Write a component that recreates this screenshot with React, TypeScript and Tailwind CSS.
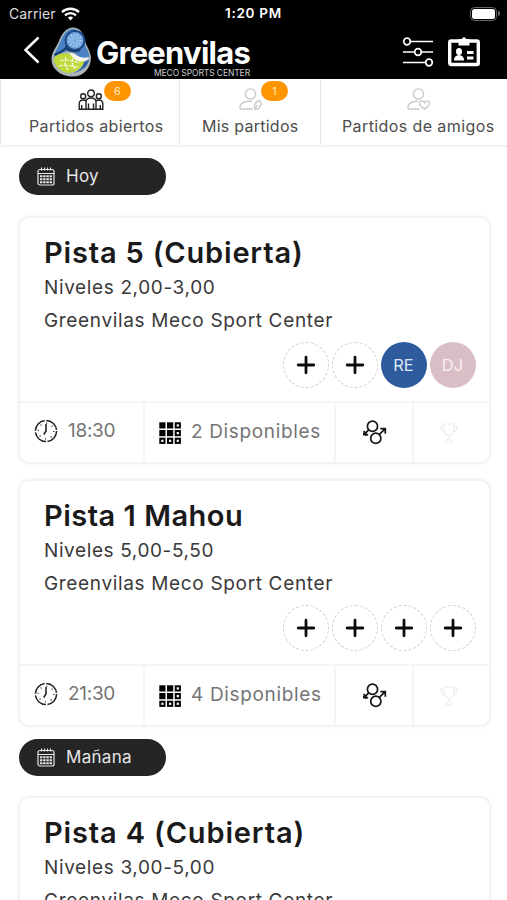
import React from "react";

const Wifi = () => (
  <svg width="19" height="14" viewBox="0 0 19 14" fill="none" stroke="#fff" strokeWidth="2.3">
    <path d="M1 5.2C5.8.6 13.2.6 18 5.2" />
    <path d="M4 8.4c3.2-3 7.8-3 11 0" />
    <path d="M6.8 10.6c1.6-1.4 3.8-1.4 5.4 0L9.5 13.4z" fill="#fff" stroke="none" />
  </svg>
);

const Logo = () => (
  <svg width="41" height="50" viewBox="0 0 41 50">
    <path d="M22 .5c7 0 10 5 11.500 12 1.500 6.500 6 11 6.500 18C40 42 32 49.500 22 49.500 10 49.500 .5 42 .5 32.500 .5 25 5 21 8 14 10.500 7 15 .5 22 .5z" fill="#a9b4b6" />
    <path d="M22 2c6 0 9 5 10.500 11.500 1.500 6.500 5.500 10 6 17-4 2-10 1-13-3-4-4-10-4-14-1.500-3 1-6 2-8.500 4C4 24 7 21 9.500 14.500 12 8 16 2 22 2z" fill="#4a80c4" />
    <path d="M3 31c3-4 10-6 15-4 6 2 8 6 16 5C33 40 24 46.500 16 46 7 43 2 37 3 31z" fill="#bfd93a" />
    <path d="M18 26c6-1 10 7 20 4-1 4-8 6-13 3-3-2-4-4-7-7z" fill="#f4f8ee" />
    <path d="M38 33c-1 6-7 11-15 13 6-3 9-6 10-11z" fill="#2a5ea6" />
    <ellipse cx="24" cy="13.500" rx="9.500" ry="9.500" fill="#6fa3dc" stroke="#1d4682" strokeWidth="2" />
    <ellipse cx="24" cy="13.500" rx="4" ry="4" fill="none" stroke="#a3c8ee" strokeWidth="6" strokeDasharray="1 1.200" />
    <path d="M16.500 18.500c-3 5-6 6-13 9.500M15 21c3 3 9 4.500 14 2" fill="none" stroke="#163d72" strokeWidth="2.200" />
    <path d="M9 34c6-2 12 0 20 2M8 39c8-2 13 1 20 1M15 30c-2 5-1 10 3 14M22 31c-2 5 0 8 2 11" fill="none" stroke="#f2f8d4" strokeWidth="1.300" strokeDasharray="4 1" />
  </svg>
);

const Filters = () => (
  <svg width="32" height="32" viewBox="0 0 32 32" fill="#000" stroke="#fff" strokeWidth="1.7">
    <path d="M1 5.500h30M1 16h30M1 26.500h30" />
    <circle cx="5" cy="5.500" r="3.300" />
    <circle cx="16" cy="16" r="3.300" />
    <circle cx="27" cy="26.500" r="3.300" />
  </svg>
);

const IdCard = () => (
  <svg width="34" height="32" viewBox="0 0 34 32">
    <rect x="2.700" y="5" width="28.600" height="23.500" rx="1.500" fill="none" stroke="#fff" strokeWidth="3.400" />
    <path d="M11.500 9.500V3h3.500a2 1.700 0 0 1 4 0h3.500v6.500z" fill="#fff" />
    <ellipse cx="12" cy="15.500" rx="3" ry="3.500" fill="#fff" />
    <path d="M7 24.500c0-4 2-5 5-5.500 3 .5 5 1.500 5 5.500z" fill="#fff" />
    <path d="M20 16.500h6.500M20 22h6.500" stroke="#fff" strokeWidth="2.800" />
  </svg>
);

const People = () => (
  <svg width="26" height="22" viewBox="0 0 26 22" fill="none" stroke="#222" strokeWidth="1.400">
    <circle cx="13" cy="4.300" r="3.300" />
    <circle cx="5.200" cy="7.300" r="2.500" />
    <circle cx="20.800" cy="7.300" r="2.500" />
    <path d="M8 20.300v-7.500C8 10.300 10 9 13 9s5 1.300 5 3.800v7.500zM8 20.300H1.200V15c0-2.800 1.800-4 4-4 1.200 0 2.100.3 2.800 1M18 20.300h6.800V15c0-2.800-1.800-4-4-4-1.200 0-2.100.3-2.800 1M10.500 14.500v5.500M15.500 14.500v5.500M3.700 16v4M22.300 16v4" />
  </svg>
);

const Person = ({ heart = false }: { heart?: boolean }) => (
  <svg width="24" height="23" viewBox="0 0 24 23" fill="none" stroke="#c9c9c9" strokeWidth="1.400">
    <circle cx="11.500" cy="6" r="5.100" />
    {heart ? (
      <>
        <path d="M12.500 21H2.200c-1.500 0-1.500-2-.7-3.800C3 14.200 6 13 11 13.200" />
        <path d="M17.500 21.200c-6-4.200-5.700-7-4-8 1.600-.9 3.300 0 4 1.400.7-1.400 2.400-2.300 4-1.400 1.700 1 2 3.800-4 8z" />
      </>
    ) : (
      <>
        <path d="M14 21H2.200c-1.500 0-1.500-2-.7-3.800C3 14 6.500 13 13 13.300" />
        <path d="M16 21c-1.500-3 .3-7.700 4.500-8.500 3.500 2.500.8 8-3.300 9zM16 21l2.500-4" />
      </>
    )}
  </svg>
);

const Calendar = () => (
  <svg width="18" height="19" viewBox="0 0 18 19" fill="none" stroke="#e8e8e8">
    <rect x="1" y="2.500" width="16" height="15.500" rx="2" strokeWidth="1.200" />
    <path d="M1 6.500h16" strokeWidth="1" />
    <path d="M4.500.5v3M7.500.5v3M10.500.5v3M13.500.5v3" strokeWidth="1.100" />
    <path d="M3 9.200h12M3 12.200h12M3 15.200h12" strokeWidth="2" strokeDasharray="2.400 .8" />
  </svg>
);

const Clock = () => (
  <svg width="24" height="24" viewBox="0 0 24 24" fill="none" stroke="#222">
    <circle cx="12" cy="12" r="10.600" strokeWidth="1.500" strokeDasharray="15 1.650" />
    <path d="M12 5v7l-2.300 3.500" strokeWidth="1.600" />
    <circle cx="12" cy="12" r="7.800" strokeWidth="1.300" strokeDasharray="1 5.126" />
  </svg>
);

const Squares = () => (
  <svg width="22" height="22" viewBox="0 0 22 22">
    {[0, 1, 2].map((r) =>
      [0, 1, 2].map((c) => (
        <g key={`${r}${c}`}>
          <rect x={c * 7.700 + 0.3} y={r * 7.700 + 0.3} width="6.200" height="6.200" fill="#000" />
          {(r === 2 || c === 2) && <rect x={c * 7.700 + 2.300} y={r * 7.700 + 2.300} width="2.200" height="2.200" fill="#fff" />}
        </g>
      )),
    )}
  </svg>
);

const Genders = () => (
  <svg width="26" height="25" viewBox="0 0 26 25" fill="none" stroke="#151515" strokeWidth="1.700">
    <circle cx="11.500" cy="6.200" r="5.100" />
    <circle cx="14.800" cy="18.200" r="5.100" />
    <path d="M7.800 9.900 2.300 15.200M2.600 11.200l4.200 4.200M2 13.500h2.500v2.500M18.400 14.400 24 8.900M19.300 8.700h5v5" />
  </svg>
);

const Trophy = () => (
  <svg width="18" height="20" viewBox="0 0 18 20" fill="none" stroke="#ececec" strokeWidth="1.100">
    <path d="M4 1h10v5c0 4-2 6-5 7-3-1-5-3-5-7zM4 3H1c0 4 1 6 4.500 6.500M14 3h3c0 4-1 6-4.500 6.500M9 13v3M6 19c0-2 1-3 3-3s3 1 3 3z" />
  </svg>
);

const Pill = ({ children }: { children: React.ReactNode }) => (
  <div className="flex h-[37px] w-[147px] items-center rounded-full bg-[#252525] pl-[18px] text-[17px] text-[#e6e6e6]">
    <Calendar />
    {children}
  </div>
);

const Plus = () => (
  <div className="flex size-[46px] items-center justify-center rounded-full border border-dashed border-[#cfcfcf]">
    <svg width="20" height="20" viewBox="0 0 20 20" stroke="#0c0c0c" strokeWidth="2.800" strokeLinecap="round">
      <path d="M10 2.200v15.600M2.200 10h15.600" />
    </svg>
  </div>
);

type CardProps = {
  title: React.ReactNode;
  levels: React.ReactNode;
  time?: React.ReactNode;
  free?: React.ReactNode;
  players?: { name: string; tone: string }[];
};

const Card = ({ title, levels, time, free, players = [] }: CardProps) => (
  <section className="h-[248px] w-[473px] shrink-0 overflow-hidden rounded-[11px] border-2 border-[#f3f3f3] bg-white shadow-[0_0_5px_rgba(0,0,0,0.04)]">
    <div className="h-[183px] pt-[17px] pr-[13.5px] pl-6">
      <h2 className="h-9 text-[29px] leading-9 font-semibold text-[#1a1a1a]">{title}</h2>
      <p className="h-[33px] text-[19px] leading-[33px] text-[#3a3a3a]">{levels}</p>
      <p className="h-[33px] text-[19px] leading-[33px] text-[#3a3a3a]">
        <span className="tracking-[0.66px]">Greenvilas Meco Sport Center</span>
      </p>
      <div className="mt-[5px] flex justify-end gap-[3px]">
        {Array.from({ length: 4 - players.length }, (_, i) => (
          <Plus key={i} />
        ))}
        {players.map((p) => (
          <div key={p.name} className={`flex size-[46px] items-center justify-center rounded-full text-[16.5px] ${p.tone}`}>
            {p.name}
          </div>
        ))}
      </div>
    </div>
    <div className="flex h-[61px] border-t-2 border-[#f5f5f5] text-[19px] text-[#757575]">
      <div className="flex w-[123px] items-center pb-[3px] pl-[14px]">
        <Clock />
        {time}
      </div>
      <div className="flex w-[191px] items-center border-l-2 border-[#f5f5f5] pl-[14px]">
        <Squares />
        {free}
      </div>
      <div className="flex w-[78px] items-center justify-center border-l-2 border-[#f5f5f5]">
        <Genders />
      </div>
      <div className="flex flex-1 items-center border-l-2 border-[#f5f5f5] pl-[26px]">
        <Trophy />
      </div>
    </div>
  </section>
);

export default function App() {
  return (
    <div className="flex h-[900px] w-[507px] flex-col overflow-hidden bg-white font-['Inter','Liberation_Sans',sans-serif] whitespace-nowrap">
      <header className="h-[79px] shrink-0 bg-black text-white">
        <div className="flex h-[27px] items-center pl-[9px]">
          <span className="w-[52px] text-[14px] tracking-[0.1px] text-[#dedede]">Carrier</span>
          <Wifi />
          <span className="ml-[145px] w-[58px] text-[13.5px] font-semibold tracking-[0.7px]">1:20 PM</span>
          <div className="ml-[187px] flex items-center">
            <div className="h-[14px] w-[27px] rounded-[4.500px] border border-[#666] p-px">
              <div className="size-full rounded-[2.500px] bg-white" />
            </div>
            <div className="ml-px h-[5px] w-[2px] rounded-r bg-[#666]" />
          </div>
        </div>
        <div className="flex h-[52px] items-start">
          <svg className="mt-[9px] ml-[23px]" width="18" height="28" viewBox="0 0 18 28" fill="none" stroke="#fff" strokeWidth="2.500">
            <path d="M15.500 1.500 2.500 14l13 12.500" />
          </svg>
          <div className="ml-[10px]">
            <Logo />
          </div>
          <div className="ml-[4px] flex w-[154px] flex-col pt-[10px]">
            <span className="h-[31px] text-[31px] leading-[31px] font-bold tracking-[-0.75px]">Greenvilas</span>
            <span className="mt-px h-[9px] text-right text-[8.5px] leading-[9px] tracking-[-0.1px] text-[#ccc]">MECO SPORTS CENTER</span>
          </div>
          <div className="mt-[9px] ml-[152px] flex gap-[13px]">
            <Filters />
            <IdCard />
          </div>
        </div>
      </header>

      <nav className="flex h-[68px] shrink-0 border-b-2 border-[#f1f1f1] text-[16px] text-[#4d4d4d]">
        <div className="flex w-[180px] flex-col border-x border-[#e8e8e8] pt-[10px]">
          <div className="relative ml-[77px] h-[23px] w-[26px]">
            <People />
            <span className="absolute -top-[8px] left-[26px] flex h-5 w-[27px] items-center justify-center rounded-full bg-[#ff9500] text-[11px] text-[#ffe5c0]">6</span>
          </div>
          <span className="ml-[28px] h-7 leading-7 tracking-[0.37px]">Partidos abiertos</span>
        </div>
        <div className="flex w-[141px] flex-col border-r border-[#e8e8e8] pt-[9px]">
          <div className="relative ml-[59px] h-6 w-6">
            <Person />
            <span className="absolute -top-[7px] left-[22px] flex h-5 w-[27px] items-center justify-center rounded-full bg-[#ff9500] text-[11px] text-[#ffe5c0]">1</span>
          </div>
          <span className="ml-[22px] h-7 leading-7 tracking-[0.25px]">Mis partidos</span>
        </div>
        <div className="flex flex-1 flex-col pt-[9px]">
          <div className="ml-[86px] h-6">
            <Person heart />
          </div>
          <span className="ml-[21px] h-7 leading-7 tracking-[0.4px]">Partidos de amigos</span>
        </div>
      </nav>

      <main className="flex flex-1 flex-col overflow-hidden pt-[11px]">
        <div className="flex h-[58px] shrink-0 pl-[19px]">
          <Pill>
            <span className="ml-[11px] tracking-[0.3px]">Hoy</span>
          </Pill>
        </div>
        <div className="flex h-[523px] shrink-0 flex-col gap-[15px] pl-[18px]">
          <Card
            title={<span className="tracking-[0.82px]">Pista 5 (Cubierta)</span>}
            levels={<span className="tracking-[0.63px]">Niveles 2,00-3,00</span>}
            time={<span className="ml-[10px] tracking-[-0.3px]">18:30</span>}
            free={<span className="ml-[10px] tracking-[0.65px]">2 Disponibles</span>}
            players={[
              { name: "RE", tone: "bg-[#2e5b9e] text-[#dce6f4]" },
              { name: "DJ", tone: "bg-[#d9bec5] text-[#f7eff1]" },
            ]}
          />
          <Card
            title={<span className="tracking-[0.5px]">Pista 1 Mahou</span>}
            levels={<span className="tracking-[0.6px]">Niveles 5,00-5,50</span>}
            time={<span className="ml-[10px] tracking-[-0.3px]">21:30</span>}
            free={<span className="ml-[10px] tracking-[0.65px]">4 Disponibles</span>}
          />
        </div>
        <div className="flex h-[57px] shrink-0 pl-[19px]">
          <Pill>
            <span className="ml-[11px] tracking-[0.3px]">Mañana</span>
          </Pill>
        </div>
        <div className="flex shrink-0 pl-[18px]">
          <Card
            title={<span className="tracking-[0.85px]">Pista 4 (Cubierta)</span>}
            levels={<span className="tracking-[0.63px]">Niveles 3,00-5,00</span>}
          />
        </div>
      </main>
    </div>
  );
}
